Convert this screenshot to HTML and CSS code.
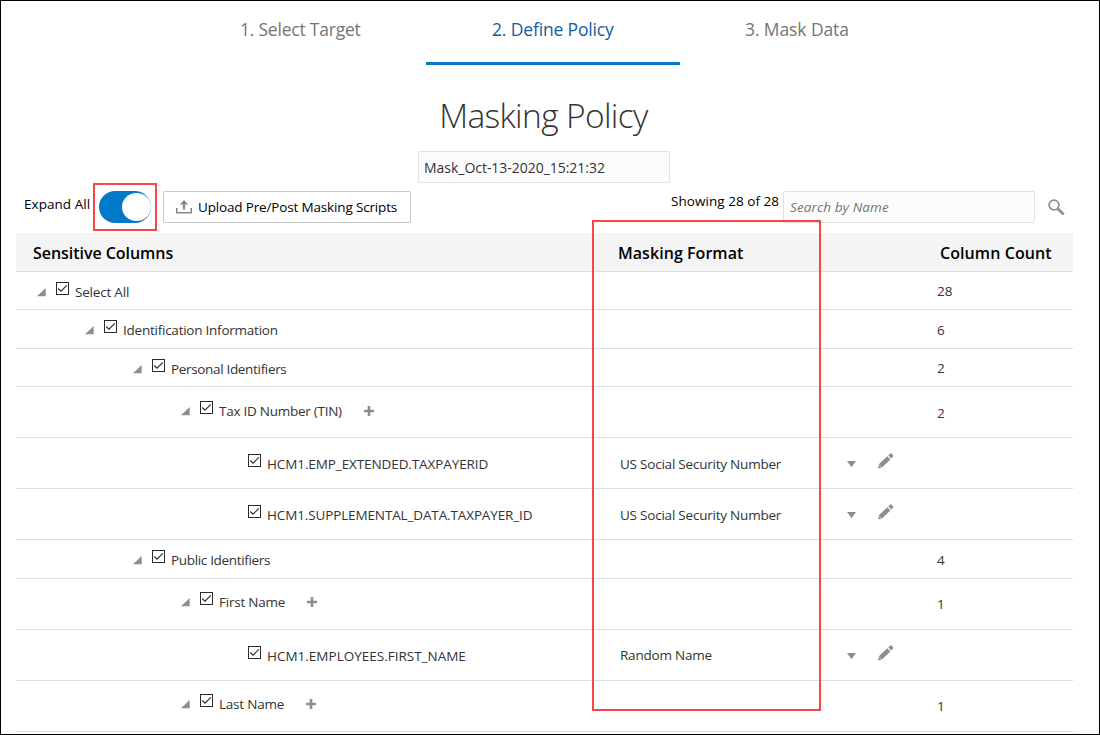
FILE: index.html
```html
<!DOCTYPE html>
<html lang="en">
<head>
<meta charset="utf-8">
<title>Masking Policy</title>
<link rel="stylesheet" href="styles.css">
</head>
<body>
<svg class="defs" width="0" height="0" aria-hidden="true">
  <symbol id="check" viewBox="0 0 13 13"><rect x=".5" y=".5" width="12" height="12" fill="#fff" stroke="#2b2b2b"/><path d="M2.2 6.5 5 9.2 10.8 3.4" fill="none" stroke="#2b2b2b" stroke-width="1.15"/></symbol>
  <symbol id="twist" viewBox="0 0 9 9"><path d="M8.7 0V8.2H0Z" fill="#8b8f94"/></symbol>
  <symbol id="plus" viewBox="0 0 10 10"><path d="M3.7 0h2.6v3.7H10v2.6H6.3V10H3.7V6.3H0V3.7h3.7Z" fill="#8b8f94"/></symbol>
  <symbol id="caret" viewBox="0 0 9 7"><path d="M0 0H9L4.5 6.2Z" fill="#8b8f94"/></symbol>
  <symbol id="pencil" viewBox="0 0 16 16"><path d="M0 15.4 1.1 11 9.3 3.3 12.4 6.4 4.3 14.3ZM10.3 2.4 12.2.6Q12.8.1 13.4.6L15.1 2.3Q15.6 2.9 15.1 3.5L13.3 5.4Z" fill="#8b8f94"/><path d="M1.3 12.4 2.9 14.1" stroke="#fff" stroke-width=".7"/></symbol>
</svg>
<main class="page">
  <nav class="train">
    <a class="step">1. Select Target</a>
    <a class="step current">2. Define Policy</a>
    <a class="step last">3. Mask Data</a>
  </nav>
  <h1 class="title"><span>Masking Policy</span></h1>
  <div class="policy-name">Mask_Oct-13-2020_15:21:32</div>
  <div class="toolbar">
    <span class="expand">Expand All</span>
    <span class="switch"><span class="thumb"></span><span class="callout callout-switch"></span></span>
    <button class="upload">
      <svg width="16" height="14" viewBox="0 0 16 14"><path d="M8 0 12.2 4.4H9.1V9.5H6.9V4.4H3.8ZM0 8h1.6v4H14.4V8H16v5.6H0Z" fill="#878b90"/></svg>
      <span>Upload Pre/Post Masking Scripts</span>
    </button>
    <span class="showing">Showing 28 of 28</span>
    <span class="search">Search by Name</span>
    <svg class="magnifier" width="17" height="17" viewBox="0 0 17 17"><circle cx="6" cy="6" r="4.9" fill="none" stroke="#8b8f94" stroke-width="1.7"/><path d="M9.8 9.8 15.7 15.5" stroke="#8b8f94" stroke-width="2.8"/></svg>
  </div>
  <section class="table">
    <div class="row head"><span class="c1">Sensitive Columns</span><span class="c2">Masking Format</span><span class="c3">Column Count</span></div>
    <div class="row h38 d0"><div class="node"><svg class="tw"><use href="#twist"/></svg><svg class="cb"><use href="#check"/></svg><span>Select All</span></div><div class="fmt"></div><div class="count">28</div></div>
    <div class="row h39 d1"><div class="node"><svg class="tw"><use href="#twist"/></svg><svg class="cb"><use href="#check"/></svg><span>Identification Information</span></div><div class="fmt"></div><div class="count">6</div></div>
    <div class="row h38 d2"><div class="node"><svg class="tw"><use href="#twist"/></svg><svg class="cb"><use href="#check"/></svg><span>Personal Identifiers</span></div><div class="fmt"></div><div class="count">2</div></div>
    <div class="row h51 d3 tax"><div class="node"><svg class="tw"><use href="#twist"/></svg><svg class="cb"><use href="#check"/></svg><span>Tax ID Number (TIN)</span><svg class="pl"><use href="#plus"/></svg></div><div class="fmt"></div><div class="count">2</div></div>
    <div class="row h51 d4"><div class="node"><svg class="cb"><use href="#check"/></svg><span class="t1">HCM1.EMP_EXTENDED.TAXPAYERID</span></div><div class="fmt"><span>US Social Security Number</span><svg class="ca"><use href="#caret"/></svg><svg class="pe"><use href="#pencil"/></svg></div><div class="count"></div></div>
    <div class="row h51 d4"><div class="node"><svg class="cb"><use href="#check"/></svg><span class="t2">HCM1.SUPPLEMENTAL_DATA.TAXPAYER_ID</span></div><div class="fmt"><span>US Social Security Number</span><svg class="ca"><use href="#caret"/></svg><svg class="pe"><use href="#pencil"/></svg></div><div class="count"></div></div>
    <div class="row h39 d2"><div class="node"><svg class="tw"><use href="#twist"/></svg><svg class="cb"><use href="#check"/></svg><span>Public Identifiers</span></div><div class="fmt"></div><div class="count">4</div></div>
    <div class="row h51 d3"><div class="node"><svg class="tw"><use href="#twist"/></svg><svg class="cb"><use href="#check"/></svg><span>First Name</span><svg class="pl"><use href="#plus"/></svg></div><div class="fmt"></div><div class="count">1</div></div>
    <div class="row h51 d4"><div class="node"><svg class="cb"><use href="#check"/></svg><span class="t3">HCM1.EMPLOYEES.FIRST_NAME</span></div><div class="fmt random"><span>Random Name</span><svg class="ca"><use href="#caret"/></svg><svg class="pe"><use href="#pencil"/></svg></div><div class="count"></div></div>
    <div class="row h51 d3"><div class="node"><svg class="tw"><use href="#twist"/></svg><svg class="cb"><use href="#check"/></svg><span>Last Name</span><svg class="pl"><use href="#plus"/></svg></div><div class="fmt"></div><div class="count">1</div></div>
    <div class="callout callout-column"></div>
  </section>
</main>
</body>
</html>
```
FILE: styles.css
```css
* { box-sizing: border-box; }
body { margin: 0; background: #fff; font-family: "Open Sans", "Noto Sans", sans-serif; font-size: 13.5px; line-height: 20px; color: #333; }
.defs { display: block; position: absolute; }
.page { width: 1100px; height: 735px; border: 1px solid #000; overflow: hidden; padding: 0 26px 0 15px; }
svg { flex: none; }
.train { display: flex; width: 762px; height: 64px; margin-left: 156px; font-size: 17.5px; letter-spacing: -.15px; color: #757575; }
.step { flex: none; width: 254px; padding: 18px 0 0 68px; white-space: nowrap; letter-spacing: -.22px; }
.current { padding-left: 66px; color: #145c9e; border-bottom: 3px solid #007ac9; letter-spacing: -.15px; }
.last { padding-left: 65px; letter-spacing: -.1px; }
.title { margin: 30px 2px 0 0; height: 55px; font-size: 33.5px; line-height: 40px; font-weight: 300; letter-spacing: -.65px; text-align: center; white-space: nowrap; }
.policy-name { width: 252px; height: 32px; margin: 1px 0 0 402px; padding: 6px 5px 0; border: 1px solid #dfe0e2; border-radius: 2px; background: #fcfcfc; font-size: 14px; letter-spacing: -.03px; }
.toolbar { display: flex; height: 50px; padding: 8px 0 0 8px; color: #000; white-space: nowrap; }
.expand { width: 75px; padding-top: 3px; letter-spacing: .05px; }
.switch { position: relative; width: 52px; height: 32px; border-radius: 16px; background: #007ac9; }
.thumb { display: block; width: 29px; height: 28px; border-radius: 50%; background: #fff; margin: 2px 0 0 22.6px; }
.callout { position: absolute; border: 2px solid #f94545; }
.callout-switch { left: -6px; top: -8px; width: 64px; height: 48px; }
.upload { display: flex; align-items: center; gap: 6px; width: 248px; height: 32px; margin-left: 12px; padding: 0 0 0 12px; border: 1px solid #c6c8ca; border-radius: 2px; background: #fff; font: inherit; letter-spacing: -.16px; color: #000; }
.showing { width: 113px; margin-left: 260px; letter-spacing: .05px; }
.search { width: 252px; height: 32px; padding: 5px 6px; border: 1px solid #dfe0e2; border-radius: 2px; background: #fcfcfc; color: #757575; font-style: italic; letter-spacing: .13px; margin-left: -1px; }
.magnifier { margin: 8px 0 0 13px; }
.table { position: relative; width: 1057px; }
.row { display: grid; grid-template-columns: 604px 317px 136px; border-bottom: 1px solid #dcdee0; white-space: nowrap; }
.head { height: 39px; background: #f4f4f4; color: #000; font-size: 16px; font-weight: 600; line-height: 38px; padding-top: 1px; }
.c1 { padding-left: 17px; letter-spacing: -.04px; }
.c2 { margin-left: -2px; letter-spacing: .05px; }
.c3 { padding-left: 3px; letter-spacing: .08px; }
.h38 { height: 38px; }
.h39 { height: 39px; }
.h51 { height: 51px; }
.node { display: flex; align-items: flex-start; padding-top: 10px; letter-spacing: -.24px; }
.d0 .node { padding-left: 21px; letter-spacing: -.2px; }
.d1 .node { padding-left: 69px; }
.d2 .node { padding-left: 117px; letter-spacing: -.33px; }
.d3 .node { padding: 13px 0 0 165px; letter-spacing: -.22px; }
.d4 .node { padding: 16px 0 0 232px; }
.tax .node { padding-top: 14px; letter-spacing: -.26px; }
.t1 { letter-spacing: -.1px; }
.t2 { letter-spacing: -.13px; }
.t3 { letter-spacing: 0; }
.tw { width: 9px; height: 9px; margin: 6px 10px 0 0; }
.cb { width: 13px; height: 13px; margin-right: 6px; }
.pl { width: 10px; height: 10px; margin: 5px 0 0 22px; }
.fmt { display: flex; align-items: flex-start; padding-top: 16px; letter-spacing: -.22px; }
.fmt span { width: 227px; }
.random span { margin-top: -1px; }
.ca { width: 9px; height: 7px; margin-top: 7px; }
.pe { width: 16px; height: 16px; margin: -1px 0 0 22px; }
.count { padding-top: 9px; }
.h39 .count { padding-top: 10px; }
.d3 .count { padding-top: 15px; }
.tax .count { padding-top: 16px; }
.callout-column { left: 576px; top: -13px; width: 229px; height: 491px; }
```
